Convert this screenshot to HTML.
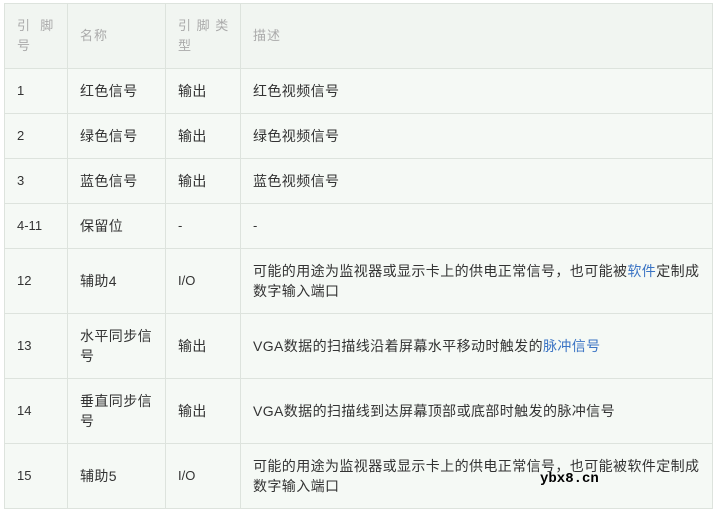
<!DOCTYPE html>
<html><head><meta charset="utf-8"><style>
body{margin:0;width:719px;height:511px;background:#fff;overflow:hidden;font-family:"Liberation Sans","Noto Sans CJK SC",sans-serif;font-size:13px;color:#333}
table{position:absolute;left:4px;top:3px;border-collapse:collapse;width:709px;table-layout:fixed}
td,th{border:1px solid #dde3dd;padding:0 12px;text-align:left;font-weight:normal;line-height:20px;vertical-align:middle;background:#f5f9f5;white-space:nowrap}
td{font-size:13px}
.c{font-size:14px;letter-spacing:0.4px}
th{background:#f1f5f1;color:#aaa;letter-spacing:1px;font-size:13px}
a{color:#3b74c4;text-decoration:none}
.wm{position:absolute;left:540px;top:471px;font-family:"Liberation Mono",monospace;font-size:14px;color:#000;font-weight:bold}
</style></head><body>
<table>
<colgroup><col style="width:63px"><col style="width:98px"><col style="width:75px"><col></colgroup>
<tr style="height:65px"><th>引&nbsp; 脚<br>号</th><th>名称</th><th>引 脚 类<br>型</th><th>描述</th></tr>
<tr style="height:45px"><td>1</td><td class="c">红色信号</td><td class="c">输出</td><td class="c">红色视频信号</td></tr>
<tr style="height:45px"><td>2</td><td class="c">绿色信号</td><td class="c">输出</td><td class="c">绿色视频信号</td></tr>
<tr style="height:45px"><td>3</td><td class="c">蓝色信号</td><td class="c">输出</td><td class="c">蓝色视频信号</td></tr>
<tr style="height:45px"><td>4-11</td><td class="c">保留位</td><td>-</td><td>-</td></tr>
<tr style="height:65px"><td>12</td><td class="c">辅助4</td><td>I/O</td><td class="c">可能的用途为监视器或显示卡上的供电正常信号，也可能被<a>软件</a>定制成<br>数字输入端口</td></tr>
<tr style="height:65px"><td>13</td><td class="c">水平同步信<br>号</td><td class="c">输出</td><td class="c">VGA数据的扫描线沿着屏幕水平移动时触发的<a>脉冲信号</a></td></tr>
<tr style="height:65px"><td>14</td><td class="c">垂直同步信<br>号</td><td class="c">输出</td><td class="c">VGA数据的扫描线到达屏幕顶部或底部时触发的脉冲信号</td></tr>
<tr style="height:65px"><td>15</td><td class="c">辅助5</td><td>I/O</td><td class="c">可能的用途为监视器或显示卡上的供电正常信号，也可能被软件定制成<br>数字输入端口</td></tr>
</table>
<div class="wm">ybx8.cn</div>
</body></html>
